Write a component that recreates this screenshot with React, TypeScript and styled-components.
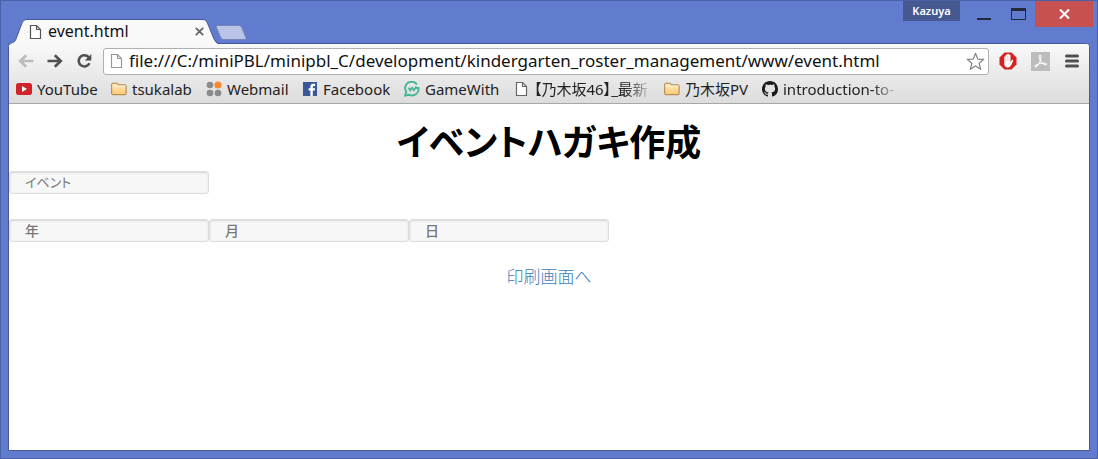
import React from 'react';
import styled, { createGlobalStyle } from 'styled-components';

const GlobalStyle = createGlobalStyle`
  * { box-sizing: border-box; }
  body { margin: 0; font-family: "Noto Sans", "Noto Sans CJK JP", sans-serif; color: #111; }
`;

const Window = styled.div`
  display: flex;
  flex-direction: column;
  min-height: 100vh;
  padding: 0 7px 7px;
  background: #617ccf;
  border: 1px solid #4861a8;
`;

const TitleBar = styled.header`
  display: flex;
  align-items: flex-end;
  height: 42px;
`;

const Tab = styled.div`
  position: relative;
  z-index: 1;
  display: flex;
  align-items: center;
  gap: 5px;
  width: 210px;
  height: 25px;
  margin-bottom: -1px;
  padding: 0 13px 0 20px;
`;

const TabShape = styled.svg`
  position: absolute;
  inset: 0;
`;

const TabTitle = styled.span`
  position: relative;
  flex: 1;
  padding-bottom: 2px;
  font-size: 16px;
  line-height: 22px;
`;

const IconButton = styled.button<{ $w?: number }>`
  position: relative;
  display: flex;
  align-items: center;
  justify-content: center;
  width: ${(p) => p.$w ?? 20}px;
  height: 20px;
  padding: 0;
  border: 0;
  background: none;
`;

const NewTab = styled.button`
  display: flex;
  height: 24px;
  margin-left: -3px;
  padding: 6px 0 0;
  border: 0;
  background: none;
`;

const WindowControls = styled.div`
  display: flex;
  align-self: flex-start;
  margin-left: auto;
  margin-right: -3px;
`;

const Profile = styled.button`
  width: 57px;
  height: 20px;
  margin-right: 7px;
  padding: 0;
  border: 0;
  background: #455890;
  color: #fff;
  font: 600 11px/20px "Noto Sans", sans-serif;
`;

const Control = styled.button<{ $w: number; $close?: boolean }>`
  display: flex;
  justify-content: center;
  align-items: center;
  width: ${(p) => p.$w}px;
  height: 26px;
  padding: 0;
  border: 0;
  background: ${(p) => (p.$close ? '#c75050' : 'transparent')};
`;

const Frame = styled.div`
  flex: 1;
  display: flex;
  flex-direction: column;
  border: 1px solid #465a9b;
  border-radius: 4px 4px 0 0;
  background: #fff;
`;

const Chrome = styled.div`
  padding: 3px 7px 0;
  border-bottom: 1px solid #a8a8a8;
  border-radius: 3px 3px 0 0;
  background: linear-gradient(#f9f9f9, #dcdcdc);
`;

const Toolbar = styled.div`
  display: flex;
  align-items: center;
  gap: 9px;
  height: 28px;
`;

const Omnibox = styled.div`
  flex: 1;
  display: flex;
  align-items: center;
  gap: 5px;
  height: 27px;
  padding: 0 3px 0 5px;
  border: 1px solid #b0b0b0;
  border-radius: 3px;
  background: #fff;
`;

const Address = styled.input`
  flex: 1;
  min-width: 0;
  height: 24px;
  padding: 0;
  border: 0;
  outline: 0;
  background: none;
  color: #111;
  font: 17px/24px "Noto Sans", "Noto Sans CJK JP", sans-serif;
`;

const Extensions = styled.div`
  display: flex;
  align-items: center;
  gap: 12px;
`;

const Bookmarks = styled.nav`
  display: flex;
  height: 28px;
`;

const Bookmark = styled.a<{ $w: number }>`
  display: flex;
  align-items: center;
  gap: 5px;
  width: ${(p) => p.$w}px;
  height: 27px;
  color: #222;
  font-size: 15px;
  line-height: 26px;
  font-feature-settings: "palt";
  text-decoration: none;
  white-space: nowrap;
  svg { flex: none; }
`;

const BookmarkLabel = styled.span<{ $fade?: boolean }>`
  ${(p) => p.$fade && 'mask-image: linear-gradient(to right, #000 80%, transparent 105%);'}
`;

const Page = styled.main`
  padding-top: 16px;
`;

const Heading = styled.h1`
  margin: 0;
  color: #000;
  font: 700 36px/40px "Noto Sans CJK JP", sans-serif;
  font-feature-settings: "palt";
  text-align: center;
`;

const Form = styled.form`
  display: flex;
  flex-direction: column;
  gap: 25px;
  padding-top: 11px;
`;

const FieldRow = styled.div`
  display: flex;
`;

const Field = styled.input<{ $bold?: boolean }>`
  width: 200px;
  height: 23px;
  padding: 0 15px 2px;
  border: 1px solid #dcdcdc;
  border-radius: 3px;
  outline: 0;
  background: #f7f7f7;
  box-shadow: inset 0 1px 2px #d8d8d8;
  font: ${(p) => (p.$bold ? '500 14px' : '400 13px')}/18px "Noto Sans CJK JP", sans-serif;
  font-feature-settings: "palt";
  &::placeholder { color: #777; opacity: 1; }
`;

const PrintLink = styled.a`
  align-self: center;
  color: #3a80b8;
  font: 300 17px/18px "Noto Sans CJK JP", sans-serif;
  text-decoration: none;
`;

const PageIcon = ({ color = '#666' }: { color?: string }) => (
  <svg width="15" height="16" viewBox="0 0 15 16" fill="#fff" stroke={color} strokeWidth="1.2" aria-hidden="true">
    <path d="M2.5 1.5h6l4 4v9h-10z" />
    <path d="M8.5 1.5v4h4" fill="none" />
  </svg>
);

const FolderIcon = () => (
  <svg width="16" height="16" viewBox="0 0 16 16" aria-hidden="true">
    <defs>
      <linearGradient id="folder" x1="0" y1="0" x2="0" y2="1">
        <stop offset="0" stopColor="#ffeabf" />
        <stop offset="1" stopColor="#fcca77" />
      </linearGradient>
    </defs>
    <path d="M.7 12.7V3.2q0-1 1-1h4.2q.9 0 1 1l.2.7h7q1 0 1 1v7.8q0 1-1 1H1.7q-1 0-1-1z" fill="url(#folder)" stroke="#ac7f3c" />
    <path d="M1.5 5.2h13" stroke="#fff4da" />
  </svg>
);

const YouTubeIcon = () => (
  <svg width="16" height="16" viewBox="0 0 16 16" aria-hidden="true">
    <rect y="2" width="16" height="12" rx="2.5" fill="#d2232a" />
    <path d="M6 5v6l5-3z" fill="#fff" />
  </svg>
);

const WebmailIcon = () => (
  <svg width="16" height="16" viewBox="0 0 16 16" fill="#8a8a8a" aria-hidden="true">
    <circle cx="4" cy="4" r="3.3" />
    <circle cx="12" cy="4" r="3.6" fill="#f58a32" />
    <circle cx="4" cy="12" r="3.3" />
    <circle cx="12" cy="12" r="3.3" />
  </svg>
);

const FacebookIcon = () => (
  <svg width="16" height="16" viewBox="0 0 16 16" aria-hidden="true">
    <rect x="1" y="1" width="14" height="14" fill="#3b5998" />
    <path d="M8.4 15V9.5H6.6V7.3h1.8V5.7q0-2.9 2.9-2.9h1.8v2.3h-1.2q-1.1 0-1.1 1v1.2h2.3l-.3 2.2h-2V15z" fill="#fff" />
  </svg>
);

const GameWithIcon = () => (
  <svg width="16" height="16" viewBox="0 0 17 17" fill="none" stroke="#3fb795" strokeWidth="2" aria-hidden="true">
    <path d="M13.8 3.8A6.8 6.8 0 1 0 2.4 11.5L1.2 15.4l4.3-.8A6.8 6.8 0 0 0 15.4 7.500H13" />
    <path d="M5 7l1.6 2.9 2-2.7 1.9 2.7 2.7-4" strokeWidth="1.8" />
  </svg>
);

const GitHubIcon = () => (
  <svg width="16" height="16" viewBox="0 0 16 16" fill="#1b1b1b" aria-hidden="true">
    <path d="M8 0C3.58 0 0 3.58 0 8c0 3.54 2.29 6.53 5.47 7.59.4.07.55-.17.55-.38 0-.19-.01-.82-.01-1.49-2.01.37-2.53-.49-2.69-.94-.09-.23-.48-.94-.82-1.13-.28-.15-.68-.52-.01-.53.63-.01 1.08.58 1.23.82.72 1.21 1.87.87 2.33.66.07-.52.28-.87.51-1.07-1.78-.2-3.64-.89-3.64-3.95 0-.87.31-1.59.82-2.15-.08-.2-.36-1.02.08-2.12 0 0 .67-.21 2.2.82.64-.18 1.32-.27 2-.27s1.36.09 2 .27c1.53-1.04 2.2-.82 2.2-.82.44 1.1.16 1.92.08 2.12.51.56.82 1.27.82 2.15 0 3.07-1.87 3.75-3.65 3.95.29.25.54.73.54 1.48 0 1.07-.01 1.93-.01 2.2 0 .21.15.46.55.38A8.01 8.01 0 0 0 16 8c0-4.42-3.58-8-8-8z" />
  </svg>
);

const ArrowIcon = ({ color, flip }: { color: string; flip?: boolean }) => (
  <svg width="16" height="16" viewBox="0 0 16 16" fill="none" stroke={color} strokeWidth="2.6" aria-hidden="true">
    <path d={flip ? 'M15.5 8H2.5M8.2 2.2L2.2 8l6 5.8' : 'M.5 8h13M7.8 2.2l6 5.8-6 5.8'} />
  </svg>
);

const ReloadIcon = () => (
  <svg width="16" height="16" viewBox="0 0 16 16" fill="none" stroke="#505050" strokeWidth="2.6" aria-hidden="true">
    <path d="M12.6 4.2A5.6 5.6 0 1 0 13.4 10.2" />
    <path d="M15.3 1v6.6H8.8z" fill="#505050" stroke="none" />
  </svg>
);

const StarIcon = () => (
  <svg width="19" height="19" viewBox="0 0 19 19" fill="#fff" stroke="#808080" strokeWidth="1.2" strokeLinejoin="round" aria-hidden="true">
    <path d="M9.5 1.3l2.3 5.8 6 .3-4.7 3.9 1.6 6-5.2-3.4-5.2 3.4 1.6-6L1.2 7.4l6-.3z" />
  </svg>
);

const AdBlockIcon = () => (
  <svg width="18" height="18" viewBox="0 0 18 18" aria-hidden="true">
    <path d="M5.5.5h7l5 5v7l-5 5h-7l-5-5v-7z" fill="#d5211f" />
    <path d="M5.3 10.3V5q0-.8.7-.8t.7.8V3.3q0-.9.8-.9t.8.9V2.6q0-.9.8-.9t.8.9v.8q0-.8.8-.8t.8.8v7l1-2q.6-1 1.4-.5.5.4.1 1.3l-2 4.4q-1 2-3.2 2-3.5 0-3.5-3.500z" fill="#fff" />
    <path d="M6.7 4.500V9M8.3 3.500V9M9.900 3.500V9" stroke="#e89a99" strokeWidth=".4" />
  </svg>
);

const PdfIcon = () => (
  <svg width="19" height="19" viewBox="0 0 19 19" aria-hidden="true">
    <path d="M0 0h19v19H0z" fill="#bcbcbc" />
    <path d="M8.800 3.300c1.700-.6 1.400 2.500.5 5.200-1 2.800-3.400 6.600-4.900 6.300-1.600-.5 1-2.500 4.800-3.300 4-.8 6.400-.2 6.200.8-.3 1.300-3.300-.2-5.200-2.500C8.400 7.500 7.600 3.800 8.800 3.300z" fill="none" stroke="#f4f4f4" strokeWidth="1.200" />
  </svg>
);

const MenuIcon = () => (
  <svg width="14" height="14" viewBox="0 0 14 14" stroke="#505050" strokeWidth="3" strokeLinecap="round" aria-hidden="true">
    <path d="M1.500 2h11M1.500 7h11M1.500 12h11" />
  </svg>
);

const bookmarks = [
  { label: 'YouTube', icon: <YouTubeIcon />, width: 95 },
  { label: 'tsukalab', icon: <FolderIcon />, width: 95 },
  { label: 'Webmail', icon: <WebmailIcon />, width: 96 },
  { label: 'Facebook', icon: <FacebookIcon />, width: 102 },
  { label: 'GameWith', icon: <GameWithIcon />, width: 110 },
  { label: '【乃木坂46】_最新', icon: <PageIcon />, width: 150, fade: true },
  { label: '乃木坂PV', icon: <FolderIcon />, width: 98 },
  { label: 'introduction-to-', icon: <GitHubIcon />, width: 140, fade: true },
];

export default function App() {
  return (
    <Window>
      <GlobalStyle />
      <TitleBar>
        <Tab>
          <TabShape width="210" height="25" viewBox="0 0 210 25" aria-hidden="true">
            <path d="M0 25C5 24 7 23 8 20L14 4Q15.500 .5 18 .5H195Q198 .5 199 3L206 20Q208 24 210 25z" fill="#f9f9f9" />
            <path d="M0 24.500C5 24 7 23 8 20L14 4Q15.500 .5 18 .5H195Q198 .5 199 3L206 20Q208 24 210 24.500" fill="none" stroke="#465a9b" />
          </TabShape>
          <IconButton $w={15} as="span"><PageIcon color="#555" /></IconButton>
          <TabTitle>event.html</TabTitle>
          <IconButton $w={12} aria-label="Close tab">
            <svg width="9" height="9" viewBox="0 0 9 9" stroke="#666" strokeWidth="1.800"><path d="M.8 .8l7.400 7.400M8.200 .8L.8 8.200" /></svg>
          </IconButton>
        </Tab>
        <NewTab aria-label="New tab">
          <svg width="32" height="16" viewBox="0 0 32 16">
            <path d="M2.500 .5H24Q26 .5 26.800 2.500L31 13Q31.500 14.500 29.500 14.500H8.500Q6.500 14.500 5.700 12.500L1.300 2Q1 .5 2.500 .5z" fill="#b9c4e6" stroke="#7484b8" />
          </svg>
        </NewTab>
        <WindowControls>
          <Profile>Kazuya</Profile>
          <Control $w={34} aria-label="Minimize">
            <svg width="14" height="14" viewBox="0 0 14 14"><path d="M0 11h14v2H0z" fill="#222938" /></svg>
          </Control>
          <Control $w={34} aria-label="Maximize">
            <svg width="15" height="12" viewBox="0 0 15 12"><path d="M.5 .5h14v11H.5z" fill="none" stroke="#222938" /><path d="M0 0h15v3H0z" fill="#222938" /></svg>
          </Control>
          <Control $w={58} $close aria-label="Close">
            <svg width="11" height="10" viewBox="0 0 11 10" stroke="#fff" strokeWidth="2"><path d="M1 .5l9 9M10 .5l-9 9" /></svg>
          </Control>
        </WindowControls>
      </TitleBar>
      <Frame>
        <Chrome>
          <Toolbar>
            <IconButton aria-label="Back"><ArrowIcon color="#bbb" flip /></IconButton>
            <IconButton aria-label="Forward"><ArrowIcon color="#505050" /></IconButton>
            <IconButton aria-label="Reload"><ReloadIcon /></IconButton>
            <Omnibox>
              <PageIcon color="#999" />
              <Address
                aria-label="Address"
                defaultValue="file:///C:/miniPBL/minipbl_C/development/kindergarten_roster_management/www/event.html"
              />
              <IconButton aria-label="Bookmark this page"><StarIcon /></IconButton>
            </Omnibox>
            <Extensions>
              <IconButton aria-label="AdBlock"><AdBlockIcon /></IconButton>
              <IconButton aria-label="PDF"><PdfIcon /></IconButton>
              <IconButton aria-label="Menu"><MenuIcon /></IconButton>
            </Extensions>
          </Toolbar>
          <Bookmarks>
            {bookmarks.map((b) => (
              <Bookmark key={b.label} href="#" $w={b.width}>
                {b.icon}
                <BookmarkLabel $fade={b.fade}>{b.label}</BookmarkLabel>
              </Bookmark>
            ))}
          </Bookmarks>
        </Chrome>
        <Page>
          <Heading>イベントハガキ作成</Heading>
          <Form>
            <Field placeholder="イベント" aria-label="イベント" />
            <FieldRow>
              <Field $bold placeholder="年" aria-label="年" />
              <Field $bold placeholder="月" aria-label="月" />
              <Field $bold placeholder="日" aria-label="日" />
            </FieldRow>
            <PrintLink href="#">印刷画面へ</PrintLink>
          </Form>
        </Page>
      </Frame>
    </Window>
  );
}
